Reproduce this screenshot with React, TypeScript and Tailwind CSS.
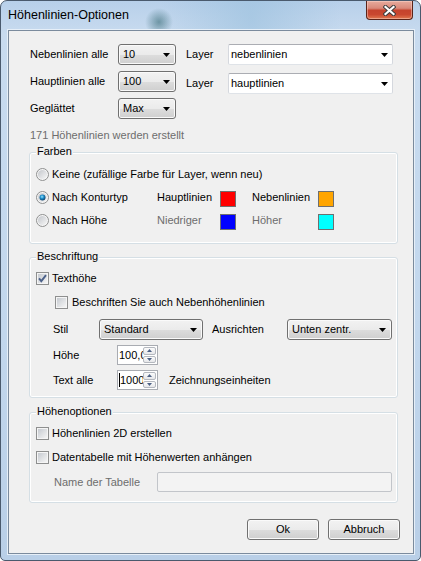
import React from "react";

function Arrow() {
  return (
    <svg width="7" height="4" viewBox="0 0 7 4" className="shrink-0">
      <path d="M0 0H7L3.5 4Z" fill="#000" />
    </svg>
  );
}

function DropList({ value, className }: { value: string; className: string }) {
  return (
    <div
      className={`flex h-[21px] items-center justify-between rounded-[3px] border border-[#707070] bg-[linear-gradient(#f2f2f2_0%,#ebebeb_50%,#dddddd_51%,#cfcfcf_100%)] pl-[4px] pr-[5px] shadow-[inset_0_0_0_1px_#fafafa] ${className}`}
    >
      <span>{value}</span>
      <Arrow />
    </div>
  );
}

function EditCombo({ value }: { value: string }) {
  return (
    <div className="flex h-[21px] w-[165px] items-center justify-between rounded-[2px] border border-[#abadb3] border-x-[#d5d8de] border-b-[#dfe3e8] bg-white pl-[2px] pr-[4px]">
      <span>{value}</span>
      <Arrow />
    </div>
  );
}

function Radio({ on, id }: { on?: boolean; id: string }) {
  return (
    <svg width="13" height="13" viewBox="0 0 13 13" className="shrink-0">
      <defs>
        <linearGradient id={`${id}g`} x1="0" y1="0" x2="1" y2="1">
          <stop offset="0" stopColor="#c3c6cb" />
          <stop offset="1" stopColor="#f7f7f7" />
        </linearGradient>
        <radialGradient id={`${id}d`} cx="0.42" cy="0.38" r="0.65">
          <stop offset="0" stopColor="#9be6ff" />
          <stop offset="0.45" stopColor="#1f8fcb" />
          <stop offset="1" stopColor="#0a3a63" />
        </radialGradient>
      </defs>
      <circle cx="6.5" cy="6.5" r="6" fill="#f6f6f6" stroke="#8e8f8f" />
      <circle cx="6.5" cy="6.5" r="4.6" fill={`url(#${id}g)`} />
      {on && <circle cx="6.5" cy="6.5" r="3" fill={`url(#${id}d)`} />}
    </svg>
  );
}

function Check({ on, id }: { on?: boolean; id: string }) {
  return (
    <svg width="13" height="13" viewBox="0 0 13 13" className="shrink-0">
      <defs>
        <linearGradient id={`${id}g`} x1="0" y1="0" x2="1" y2="1">
          <stop offset="0" stopColor="#c6cad0" />
          <stop offset="1" stopColor="#f5f5f5" />
        </linearGradient>
      </defs>
      <rect x="0.5" y="0.5" width="12" height="12" fill="#f5f5f5" stroke="#8e8f8f" />
      <rect x="2" y="2" width="9" height="9" fill={`url(#${id}g)`} />
      {on && (
        <path
          d="M3 6.3L5.3 9.2L10 3.2"
          stroke="#4c6189"
          strokeWidth="1.9"
          fill="none"
        />
      )}
    </svg>
  );
}

function Swatch({ className }: { className: string }) {
  return <div className={`mt-[3px] h-[16px] w-[16px] shrink-0 border border-[#6f6f6f] ${className}`} />;
}

function SpinBtn({ up }: { up?: boolean }) {
  return (
    <div className="flex flex-1 items-center justify-center rounded-[2px] border border-[#b4b8bf] bg-[linear-gradient(#fbfbfb,#e6e7ea)]">
      <svg width="5" height="3" viewBox="0 0 5 3">
        <path d={up ? "M0 3H5L2.5 0Z" : "M0 0H5L2.5 3Z"} fill="#4d6185" />
      </svg>
    </div>
  );
}

function Spin({ value, caret }: { value: string; caret?: boolean }) {
  return (
    <div className="flex h-[20px] w-[41px] border border-[#a9acb2] bg-white">
      <div className="flex flex-1 items-center overflow-hidden whitespace-nowrap pl-px">
        {caret && <span className="h-[14px] w-px shrink-0 bg-black" />}
        <span>{value}</span>
      </div>
      <div className="flex w-[14px] flex-col gap-px py-px pr-px">
        <SpinBtn up />
        <SpinBtn />
      </div>
    </div>
  );
}

function Btn({ label }: { label: string }) {
  return (
    <button
      type="button"
      className="flex h-[21px] w-[72px] items-center justify-center rounded-[3px] border border-[#707070] bg-[linear-gradient(#f2f2f2_0%,#ebebeb_50%,#dddddd_51%,#cfcfcf_100%)] text-[11px] leading-[13px] shadow-[inset_0_0_0_1px_#fafafa]"
    >
      {label}
    </button>
  );
}

function Group({
  title,
  className,
  children,
}: {
  title: string;
  className: string;
  children: React.ReactNode;
}) {
  return (
    <div
      className={`w-[369px] rounded-[3px] border border-[#d5dfe5] shadow-[inset_0_0_0_1px_#ffffff] ${className}`}
    >
      <div className="-mt-[8px] ml-[6px] h-[13px] w-fit bg-[#f0f0f0] px-px">{title}</div>
      {children}
    </div>
  );
}

function CloseBtn() {
  return (
    <div className="mr-[7px] flex h-[19px] w-[47px] items-center justify-center rounded-b-[4px] border border-t-0 border-[#5a2419] bg-[linear-gradient(#e7ab9d_0%,#d9897a_40%,#c5432d_52%,#c9472f_75%,#e0784f_100%)] shadow-[inset_0_0_0_1px_rgba(255,220,210,0.45)]">
      <svg width="13" height="11" viewBox="0 0 13 11">
        <path d="M2.5 2L10.5 9M10.5 2L2.5 9" stroke="#3d3d3d" strokeWidth="4.2" strokeLinecap="square" />
        <path d="M2.5 2L10.5 9M10.5 2L2.5 9" stroke="#ffffff" strokeWidth="2.2" strokeLinecap="square" />
      </svg>
    </div>
  );
}

export default function App() {
  return (
    <div className="h-[561px] w-[421px] bg-white text-[11px] leading-[13px] text-black [font-family:'Liberation_Sans',Arial,sans-serif]">
      <div className="flex h-[561px] w-[421px] flex-col rounded-t-[7px] rounded-b-[5px] border border-[#4a5a6d] bg-[radial-gradient(circle_at_158px_21px,rgba(40,95,105,0.55),transparent_14px),radial-gradient(ellipse_at_250px_18px,rgba(150,190,220,0.55),transparent_90px),linear-gradient(180deg,#b8d0ea_0%,#c8dbef_6%,#c2d7ed_60%,#b9cfe7_100%)]">
        {/* Title bar */}
        <div className="flex h-[29px] items-start justify-between">
          <div className="pl-[7px] pt-[7px] text-[12.5px] leading-[15px]">Höhenlinien-Optionen</div>
          <CloseBtn />
        </div>

        {/* Client area */}
        <div className="ml-[7px] flex h-[524px] w-[406px] flex-col border border-[#7b8b9d] bg-[#f0f0f0] pl-[20px] shadow-[0_0_0_1px_#e6eff8]">
          <div className="mt-[13px] flex flex-col gap-[6px] pl-px">
            <div className="flex h-[21px] items-center">
              <span className="w-[88px]">Nebenlinien alle</span>
              <DropList value="10" className="w-[58px]" />
              <span className="ml-[10px] w-[42px]">Layer</span>
              <EditCombo value="nebenlinien" />
            </div>
            <div className="flex h-[21px] items-center">
              <span className="w-[88px]">Hauptlinien alle</span>
              <DropList value="100" className="w-[58px]" />
              <span className="ml-[10px] mt-[4px] w-[42px]">Layer</span>
              <div className="mt-[4px]">
                <EditCombo value="hauptlinien" />
              </div>
            </div>
            <div className="flex h-[21px] items-center">
              <span className="w-[88px]">Geglättet</span>
              <DropList value="Max" className="w-[58px]" />
            </div>
          </div>

          <div className="mt-[10px] pl-px text-[#6d6d6d]">171 Höhenlinien werden erstellt</div>

          <Group title="Farben" className="mt-[10px] pb-[12px]">
            <div className="mt-[5px] flex flex-col gap-px pl-[6px]">
              <div className="flex h-[22px] items-center gap-[3px]">
                <Radio id="ra" />
                <span>Keine (zufällige Farbe für Layer, wenn neu)</span>
              </div>
              <div className="flex h-[22px] items-center">
                <div className="flex w-[121px] items-center gap-[3px]">
                  <Radio id="rb" on />
                  <span>Nach Konturtyp</span>
                </div>
                <span className="w-[63px]">Hauptlinien</span>
                <Swatch className="bg-[#ff0000]" />
                <span className="ml-[16px] w-[66px]">Nebenlinien</span>
                <Swatch className="bg-[#ffa500]" />
              </div>
              <div className="flex h-[22px] items-center">
                <div className="flex w-[121px] items-center gap-[3px]">
                  <Radio id="rc" />
                  <span>Nach Höhe</span>
                </div>
                <span className="w-[63px] text-[#6d6d6d]">Niedriger</span>
                <Swatch className="bg-[#0000ff]" />
                <span className="ml-[16px] w-[66px] text-[#6d6d6d]">Höher</span>
                <Swatch className="bg-[#00ffff]" />
              </div>
            </div>
          </Group>

          <Group title="Beschriftung" className="mt-[13px] pb-[7px]">
            <div className="mt-[7px] flex h-[16px] items-center gap-[3px] pl-[6px]">
              <Check id="ca" on />
              <span>Texthöhe</span>
            </div>
            <div className="mt-[8px] flex h-[16px] items-center gap-[4px] pl-[25px]">
              <Check id="cb" />
              <span>Beschriften Sie auch Nebenhöhenlinien</span>
            </div>
            <div className="mt-[9px] flex h-[21px] items-center pl-[23px]">
              <span className="w-[46px]">Stil</span>
              <DropList value="Standard" className="w-[104px]" />
              <span className="ml-[9px] w-[75px]">Ausrichten</span>
              <DropList value="Unten zentr." className="w-[105px]" />
            </div>
            <div className="mt-[5px] flex h-[20px] items-center pl-[23px]">
              <span className="w-[64px]">Höhe</span>
              <Spin value="100,00" />
            </div>
            <div className="mt-[5px] flex h-[20px] items-center pl-[23px]">
              <span className="w-[64px]">Text alle</span>
              <Spin value="1000" caret />
              <span className="ml-[11px]">Zeichnungseinheiten</span>
            </div>
          </Group>

          <Group title="Höhenoptionen" className="mt-[14px] pb-[10px]">
            <div className="mt-[7px] flex h-[16px] items-center gap-[3px] pl-[6px]">
              <Check id="cc" />
              <span>Höhenlinien 2D erstellen</span>
            </div>
            <div className="mt-[8px] flex h-[16px] items-center gap-[3px] pl-[6px]">
              <Check id="cd" />
              <span>Datentabelle mit Höhenwerten anhängen</span>
            </div>
            <div className="mt-[7px] flex h-[20px] items-center pl-[24px]">
              <span className="w-[103px] text-[#6d6d6d]">Name der Tabelle</span>
              <div className="h-[20px] w-[235px] rounded-[2px] border border-[#c2c5ca] bg-[#f3f3f3]" />
            </div>
          </Group>

          <div className="mt-[16px] flex justify-end gap-[9px] pr-[13px]">
            <Btn label="Ok" />
            <Btn label="Abbruch" />
          </div>
        </div>
      </div>
    </div>
  );
}
